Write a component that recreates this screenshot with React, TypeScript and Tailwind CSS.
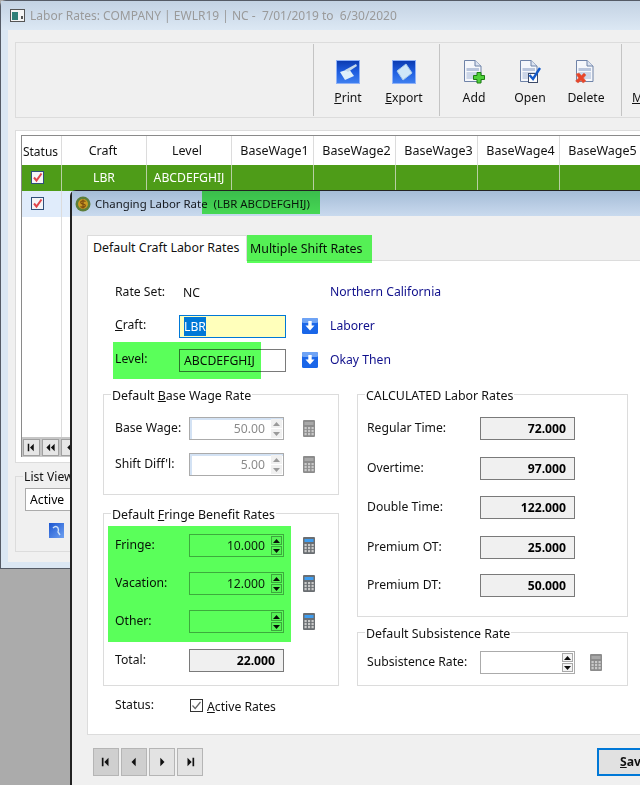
import type { ReactNode } from 'react'

const FONT = "font-['Noto_Sans','Open_Sans',sans-serif]"

// ---- icons
function BlueSquare({ kind }: { kind: 'print' | 'export' }) {
  return (
    <svg width="24" height="24" viewBox="0 0 24 24">
      <defs>
        <linearGradient id={`sq-${kind}`} x1="0" y1="0" x2="0" y2="1">
          <stop offset="0" stopColor="#0a3ab0" />
          <stop offset="0.5" stopColor="#1f5ee0" />
          <stop offset="1" stopColor="#3f80f0" />
        </linearGradient>
      </defs>
      <rect x="0.5" y="0.5" width="23" height="23" fill={`url(#sq-${kind})`} stroke="#8fb2f8" />
      {kind === 'print' ? (
        <>
          <path d="M4 12 L13 9 L18 16 L9 20 Z" fill="#dff0fb" />
          <path d="M9 10 L20 4 L21 6 L12 12 Z" fill="#c4d8ea" />
        </>
      ) : (
        <path d="M5 11 L14 4 L20 13 L11 20 Z" fill="#cfe7f8" stroke="#a5c8e8" strokeWidth="1" />
      )}
    </svg>
  )
}

function DocIcon({ kind }: { kind: 'add' | 'open' | 'delete' }) {
  return (
    <svg width="22" height="24" viewBox="0 0 22 24">
      <path d="M1.5 0.5 H12 L18 6 V21.5 H1.5 Z" fill="#f5f7fb" stroke="#6f83a8" />
      <path d="M12 0.5 V6 H18" fill="#dbe3f0" stroke="#6f83a8" />
      <rect x="3.5" y="8" width="12.5" height="3" fill="#b9c5dc" />
      <rect x="3.5" y="12" width="12.5" height="7" fill="#ccd6e8" />
      {kind === 'add' && (
        <path d="M14 12.5 H18 V15.5 H21.5 V19.5 H18 V23 H14 V19.5 H10.5 V15.5 H14 Z" fill="#4ed03a" stroke="#1d7d12" />
      )}
      {kind === 'open' && (
        <>
          <rect x="9.5" y="13.5" width="9" height="9" fill="#fff" stroke="#3c4a68" />
          <path d="M10.5 15 L14 19 L21 8" fill="none" stroke="#1358c8" strokeWidth="2.4" />
        </>
      )}
      {kind === 'delete' && (
        <path d="M1 14 L4 13 L6.5 15.5 L9 13 L11 15 L8.5 18 L11 21 L8 23 L6 20.5 L3 23 L0.5 21 L3.5 18 Z" fill="#e8452a" stroke="#d86a50" strokeWidth="0.5" />
      )}
    </svg>
  )
}

function RedCheck() {
  return (
    <svg width="13" height="13" viewBox="0 0 13 13" className="block">
      <rect x="0.5" y="0.5" width="12" height="12" fill="#f5f5f7" stroke="#2f4f7a" />
      <path d="M3 6.5 L5.5 9.5 L10.5 2.5" fill="none" stroke="#e0454a" strokeWidth="2" />
    </svg>
  )
}

function DownButton() {
  return (
    <svg width="16" height="16" viewBox="0 0 16 16" className="block">
      <rect width="16" height="16" rx="1.5" fill="#1a66e8" />
      <rect width="16" height="5" rx="1.5" fill="#6ea3f5" />
      <path d="M6.3 3 H9.7 V7.5 H12.5 L8 12.5 L3.5 7.5 H6.3 Z" fill="#fff" />
    </svg>
  )
}

function Calc({ active = false }: { active?: boolean }) {
  return (
    <svg width="12" height="17" viewBox="0 0 12 17" className="block">
      <rect width="12" height="17" rx="1" fill={active ? '#6a6e72' : '#8c8c8c'} />
      <rect x="1.5" y="2" width="9" height="3" fill={active ? '#3f9df0' : '#a8a8a8'} />
      {[7, 10, 13].map((y) =>
        [1.5, 5, 8.5].map((x) => <rect key={`${x}-${y}`} x={x} y={y} width="2.2" height="2.2" fill="#c9c9c9" />),
      )}
    </svg>
  )
}

function NavGlyph({ kind, size = 9 }: { kind: 'first' | 'prev' | 'next' | 'last' | 'rew'; size?: number }) {
  const d = {
    first: 'M1 1 H3 V11 H1 Z M9 1 V11 L4 6 Z',
    prev: 'M8 1 V11 L3 6 Z',
    next: 'M4 1 V11 L9 6 Z',
    last: 'M3 1 V11 L8 6 Z M9 1 H11 V11 H9 Z',
    rew: 'M5.5 1 V11 L0.5 6 Z M11.5 1 V11 L6.5 6 Z',
  }[kind]
  return (
    <svg width={size} height={size} viewBox="0 0 12 12" className="block">
      <path d={d} fill="#111" />
    </svg>
  )
}

// ---- form pieces
function Spin({ disabled = false }: { disabled?: boolean }) {
  const fill = disabled ? '#9a9a9a' : '#111'
  const box = disabled
    ? 'w-[11px] h-[9px] flex items-center justify-center bg-[#f0f0f0]'
    : 'w-[11px] h-[9px] flex items-center justify-center border border-[#a8a8a8] bg-[#f4f4f4]'
  return (
    <div className="flex flex-col gap-px mr-px">
      <div className={box}>
        <svg width="7" height="4" viewBox="0 0 7 4"><path d="M3.5 0 L7 4 H0 Z" fill={fill} /></svg>
      </div>
      <div className={box}>
        <svg width="7" height="4" viewBox="0 0 7 4"><path d="M0 0 H7 L3.5 4 Z" fill={fill} /></svg>
      </div>
    </div>
  )
}

function SpinInput({ value, disabled = false }: { value?: string; disabled?: boolean }) {
  return (
    <div
      className={
        disabled
          ? 'w-[95px] h-[23px] flex items-center justify-end border border-[#ababab] bg-white shadow-[inset_2px_2px_0_#d3e2f4]'
          : 'w-[95px] h-[23px] flex items-center justify-end border border-[#ababab] bg-white'
      }
    >
      <span className={disabled ? 'mr-[6px] pt-[2px] text-[#8b8b8b]' : 'mr-[6px] pt-[2px] text-[#222]'}>{value}</span>
      <Spin disabled={disabled} />
    </div>
  )
}

function ReadBox({ value }: { value: string }) {
  return (
    <div className="w-[95px] h-[23px] flex items-center justify-end pr-[8px] pt-[2px] border border-[#7a7a7a] bg-[#f0f0f0] font-bold text-black">
      {value}
    </div>
  )
}

function Group({ title, className, pad, children }: { title: ReactNode; className: string; pad: string; children: ReactNode }) {
  return (
    <fieldset className={`border border-[#dcdcdc] ${className}`}>
      <legend className="ml-[7px] px-px leading-[17px] text-[12.4px]">
        <span className="relative top-px">{title}</span>
      </legend>
      <div className={pad}>{children}</div>
    </fieldset>
  )
}

function ToolButton({ icon, label }: { icon: ReactNode; label: ReactNode }) {
  return (
    <div className="w-14 flex flex-col items-center pt-[16px]">
      <div className="h-6 flex items-center">{icon}</div>
      <div className="mt-[5px] leading-[17px]">{label}</div>
    </div>
  )
}

const wageCols = ['BaseWage1', 'BaseWage2', 'BaseWage3', 'BaseWage4', 'BaseWage5']

function MainWindow() {
  return (
    <div className="absolute left-0 top-0 w-[660px] h-[569px] border-l border-t border-b border-[#555b66] rounded-tl-md bg-[#dbe7f3] flex flex-col">
      <div className="h-[29px] shrink-0 flex items-center pl-[9px] bg-gradient-to-b from-[#c3d2e3] to-[#dce8f4] text-[#9a9a9a]">
        <svg width="15" height="13" viewBox="0 0 15 13" className="mr-[5px]">
          <rect x="0.5" y="0.5" width="14" height="12" fill="#f4f4f4" stroke="#555" />
          <rect x="2" y="3" width="6" height="8" fill="#2f7f78" />
          <rect x="11" y="7" width="2" height="3" fill="#555" />
        </svg>
        <span className="text-[12px]">Labor Rates: COMPANY | EWLR19 | NC -&nbsp; 7/01/2019 to&nbsp; 6/30/2020</span>
      </div>
      <div className="ml-[7px] h-[532px] bg-[#f0f0f0] pt-3 pl-[7px]">
        {/* toolbar */}
        <div className="h-[76px] flex border-y border-l border-[#dcdcdc] text-[#111]">
          <div className="w-[298px] my-px border-r border-[#c4c4c4]" />
          <div className="flex pl-[6px] pr-[7px] my-px border-r border-[#c4c4c4]">
            <ToolButton icon={<BlueSquare kind="print" />} label={<><u>P</u>rint</>} />
            <ToolButton icon={<BlueSquare kind="export" />} label={<><u>E</u>xport</>} />
          </div>
          <div className="flex pl-[6px] pr-[7px] my-px border-r border-[#c4c4c4]">
            <ToolButton icon={<DocIcon kind="add" />} label="Add" />
            <ToolButton icon={<DocIcon kind="open" />} label="Open" />
            <ToolButton icon={<DocIcon kind="delete" />} label="Delete" />
          </div>
          <div className="pl-[10px] pt-[46px] leading-[17px]"><u>M</u></div>
        </div>
        {/* grid */}
        <div className="mt-[12px] h-[333px] border border-[#dcdcdc] bg-white pt-[4px] pl-[5px]">
          <div className="h-[322px] border-l border-t border-[#8a8a8a] flex flex-col relative">
            <div className="h-[29px] flex text-[#111] text-[12.5px]">
              <div className="w-10 shrink-0 pt-[2px] pr-[2px] flex items-center justify-center border-r border-[#dcdcdc] text-[12px]">Status</div>
              <div className="w-[85px] shrink-0 pt-[2px] pr-[2px] flex items-center justify-center border-r border-[#dcdcdc]">Craft</div>
              <div className="w-[85px] shrink-0 pt-[2px] pr-[4px] flex items-center justify-center border-r border-[#dcdcdc]">Level</div>
              {wageCols.map((c) => (
                <div key={c} className="w-[82px] shrink-0 pt-[2px] pl-[4px] flex items-center justify-center border-r border-[#dcdcdc]">{c}</div>
              ))}
            </div>
            <div className="h-[26px] flex bg-[#4e9c18] text-white">
              <div className="w-10 shrink-0 flex items-center pl-[9px] pb-[2px] border-r border-[#b8cfa4]"><RedCheck /></div>
              <div className="w-[85px] shrink-0 flex items-center justify-center border-r border-[#b8cfa4]">LBR</div>
              <div className="w-[85px] shrink-0 flex items-center justify-center border-r border-[#b8cfa4]">ABCDEFGHIJ</div>
              {wageCols.map((c) => (
                <div key={c} className="w-[82px] shrink-0 border-r border-[#b8cfa4]" />
              ))}
            </div>
            <div className="h-[26px] flex bg-[#e0ecfb]">
              <div className="w-10 shrink-0 flex items-center pl-[9px] pb-[2px] border-r border-[#dcdcdc]"><RedCheck /></div>
              <div className="flex-1" />
            </div>
            <div className="flex-1 flex">
              <div className="w-10 shrink-0 border-r border-[#dcdcdc]" />
            </div>
            <div className="h-[20px] flex items-center gap-0.5 pl-px bg-[#c6c6c6]">
              <div className="w-[17px] h-[17px] flex items-center justify-center border border-[#a0a0a0] bg-[#e6e6e6]"><NavGlyph kind="first" /></div>
              <div className="w-[17px] h-[17px] flex items-center justify-center border border-[#a0a0a0] bg-[#e6e6e6]"><NavGlyph kind="rew" /></div>
              <div className="w-[17px] h-[17px] flex items-center justify-center border border-[#a0a0a0] bg-[#e6e6e6]"><NavGlyph kind="prev" /></div>
            </div>
          </div>
        </div>
        {/* list view */}
        <div className="mt-[5px]">
          <fieldset className="w-[100px] h-[84px] border border-[#dcdcdc] border-r-0">
            <legend className="ml-[7px] px-px leading-[17px] text-[#111]">List View</legend>
            <div className="ml-[9px] mt-[3px] w-[80px] h-[23px] flex items-center pl-[4px] pt-[2px] border border-[#ababab] bg-white">Active</div>
            <div className="ml-[33px] mt-[12px] w-[15px] h-[15px] bg-gradient-to-br from-[#1b55d0] to-[#6fa0f0] flex items-center justify-center">
              <svg width="11" height="11" viewBox="0 0 11 11"><path d="M2 3 Q5 0 7 3 Q8 5 7 7 L9 10" fill="none" stroke="#cfe2f8" strokeWidth="1.4" /></svg>
            </div>
          </fieldset>
        </div>
      </div>
    </div>
  )
}

function Dialog() {
  return (
    <div className="absolute left-[70px] top-[190px] w-[590px] h-[600px] border-l-2 border-t border-[#222] rounded-tl-md bg-[#f0f0f0] flex flex-col text-[#111]">
      <div className="h-[25px] shrink-0 flex items-center pl-[3px] bg-gradient-to-b from-[#a5bcd7] to-[#c9daee]">
        <svg width="16" height="16" viewBox="0 0 16 16" className="mr-[4px]">
          <circle cx="8" cy="8" r="7.5" fill="#5c7e3a" />
          <circle cx="8" cy="8" r="5" fill="#c99a22" />
          <path d="M10.5 5.5 Q8 4 6 5.5 Q5 7.5 8 8 Q11 8.5 10 10.5 Q8 12 5.5 10.5 M8 3.5 V12.5" fill="none" stroke="#7a4a10" strokeWidth="1.2" />
        </svg>
        <span className="text-[11.4px] text-[#14181e]">Changing Labor Rate&nbsp; (LBR ABCDEFGHIJ)</span>
      </div>
      <div className="flex-1 pl-[15px]">
        {/* tabs */}
        <div className="mt-[19px] flex h-[25px] text-[12.4px]">
          <div className="w-[160px] h-[26px] pl-[5px] flex items-center border-x border-t border-[#dcdcdc] bg-white relative z-10">Default Craft Labor Rates</div>
          <div className="ml-[2px] mt-[4px] pl-[1px] flex items-center">Multiple Shift Rates</div>
        </div>
        {/* tab panel */}
        <div className="h-[475px] border-l border-y border-[#dcdcdc] bg-white pl-[15px]">
          <div className="h-[125px] flex flex-col">
            <div className="mt-[23px] flex items-center h-[17px]">
              <span className="w-[68px] pl-[12px] box-content">Rate Set:</span>
              <span className="pt-[2px]">NC</span>
              <span className="ml-[130px] text-[#10108c]">Northern California</span>
            </div>
            <div className="mt-[13px] flex items-center h-[24px]">
              <span className="w-[64px] pl-[12px] pb-[2px] box-content"><u>C</u>raft:</span>
              <div className="w-[107px] h-[23px] pl-1 flex items-center border border-[#0078d7] bg-[#ffffbb]">
                <span className="bg-[#0078d7] text-white leading-[19px]">LBR</span>
              </div>
              <div className="ml-[16px]"><DownButton /></div>
              <span className="ml-[12px] text-[#10108c]">Laborer</span>
            </div>
            <div className="mt-[10px] flex items-center h-[24px]">
              <span className="w-[64px] pl-[12px] pb-[2px] box-content">Level:</span>
              <div className="w-[107px] h-[23px] pl-1 pt-[2px] flex items-center border border-[#7a7a7a] bg-white">ABCDEFGHIJ</div>
              <div className="ml-[16px]"><DownButton /></div>
              <span className="ml-[12px] text-[#10108c]">Okay Then</span>
            </div>
          </div>
          <div className="flex gap-[18px] items-start">
            <div className="w-[236px] shrink-0 flex flex-col">
              <Group title={<>Default <u>B</u>ase Wage Rate</>} className="h-[109px]" pad="pl-[11px]">
                <div className="mt-[14px] flex items-center">
                  <span className="w-[74px]">Base Wage:</span>
                  <SpinInput value="50.00" disabled />
                  <div className="ml-[19px]"><Calc /></div>
                </div>
                <div className="mt-[13px] flex items-center">
                  <span className="w-[74px]">Shift Diff&apos;l:</span>
                  <SpinInput value="5.00" disabled />
                  <div className="ml-[19px]"><Calc /></div>
                </div>
              </Group>
              <Group title={<>Default <u>F</u>ringe Benefit Rates</>} className="mt-[10px] h-[181px]" pad="pl-[11px]">
                <div className="mt-[12px] flex items-center">
                  <span className="w-[74px]">Fringe:</span>
                  <SpinInput value="10.000" />
                  <div className="ml-[19px]"><Calc active /></div>
                </div>
                <div className="mt-[15px] flex items-center">
                  <span className="w-[74px]">Vacation:</span>
                  <SpinInput value="12.000" />
                  <div className="ml-[19px]"><Calc active /></div>
                </div>
                <div className="mt-[15px] flex items-center">
                  <span className="w-[74px]">Other:</span>
                  <SpinInput />
                  <div className="ml-[19px]"><Calc active /></div>
                </div>
                <div className="mt-[16px] flex items-center">
                  <span className="w-[74px]">Total:</span>
                  <ReadBox value="22.000" />
                </div>
              </Group>
              <div className="mt-[11px] pl-[12px] flex items-center h-[17px]">
                <span className="w-[75px]">Status:</span>
                <svg width="13" height="13" viewBox="0 0 13 13" className="mr-[4px]">
                  <rect x="0.5" y="0.5" width="12" height="12" fill="#fff" stroke="#333" />
                  <path d="M2.5 6.5 L5.2 9.5 L10.5 3" fill="none" stroke="#666" strokeWidth="1.2" />
                </svg>
                <span className="pt-[3px]"><u>A</u>ctive Rates</span>
              </div>
            </div>
            <div className="w-[271px] shrink-0 flex flex-col">
              <Group title="CALCULATED Labor Rates" className="h-[231px]" pad="pl-[9px]">
                <div className="mt-[14px] flex items-center">
                  <span className="w-[113px]">Regular Time:</span>
                  <ReadBox value="72.000" />
                </div>
                <div className="mt-[17px] flex items-center">
                  <span className="w-[113px]">Overtime:</span>
                  <ReadBox value="97.000" />
                </div>
                <div className="mt-[16px] flex items-center">
                  <span className="w-[113px]">Double Time:</span>
                  <ReadBox value="122.000" />
                </div>
                <div className="mt-[17px] flex items-center">
                  <span className="w-[113px]">Premium OT:</span>
                  <ReadBox value="25.000" />
                </div>
                <div className="mt-[15px] flex items-center">
                  <span className="w-[113px]">Premium DT:</span>
                  <ReadBox value="50.000" />
                </div>
              </Group>
              <Group title="Default Subsistence Rate" className="mt-[7px] h-[62px]" pad="pl-[9px]">
                <div className="mt-[10px] flex items-center">
                  <span className="w-[113px]">Subsistence Rate:</span>
                  <SpinInput />
                  <div className="ml-[15px]"><Calc /></div>
                </div>
              </Group>
            </div>
          </div>
        </div>
        {/* footer */}
        <div className="mt-[13px] flex items-start pl-[6px]">
          <div className="flex gap-0.5">
            <div className="w-[26px] h-[28px] flex items-center justify-center border border-[#b5b5b5] bg-[#cfcfcf]"><NavGlyph kind="first" size={10} /></div>
            <div className="w-[26px] h-[28px] flex items-center justify-center border border-[#b5b5b5] bg-[#cfcfcf]"><NavGlyph kind="prev" size={10} /></div>
            <div className="w-[26px] h-[28px] flex items-center justify-center border border-[#b5b5b5] bg-[#e3e3e3]"><NavGlyph kind="next" size={10} /></div>
            <div className="w-[26px] h-[28px] flex items-center justify-center border border-[#b5b5b5] bg-[#e3e3e3]"><NavGlyph kind="last" size={10} /></div>
          </div>
          <div className="ml-[394px] w-[90px] h-[28px] pl-[21px] flex items-center border-2 border-[#0078d7] bg-[#e1e1e1] font-bold"><u>S</u>ave</div>
        </div>
      </div>
    </div>
  )
}

export default function App() {
  return (
    <div className={`relative w-[640px] h-[785px] overflow-hidden bg-[#ababab] text-[12.2px] ${FONT}`}>
      <MainWindow />
      <Dialog />
      {/* green markup drawn over the screenshot */}
      <div className="absolute left-[202px] top-[191px] w-[118px] h-[23px] bg-[#5aff5a] mix-blend-multiply" />
      <div className="absolute left-[247px] top-[235px] w-[125px] h-[28px] bg-[#5aff5a] mix-blend-multiply" />
      <div className="absolute left-[113px] top-[342px] w-[148px] h-[37px] bg-[#5aff5a] mix-blend-multiply" />
      <div className="absolute left-[108px] top-[526px] w-[183px] h-[116px] bg-[#5aff5a] mix-blend-multiply" />
    </div>
  )
}
